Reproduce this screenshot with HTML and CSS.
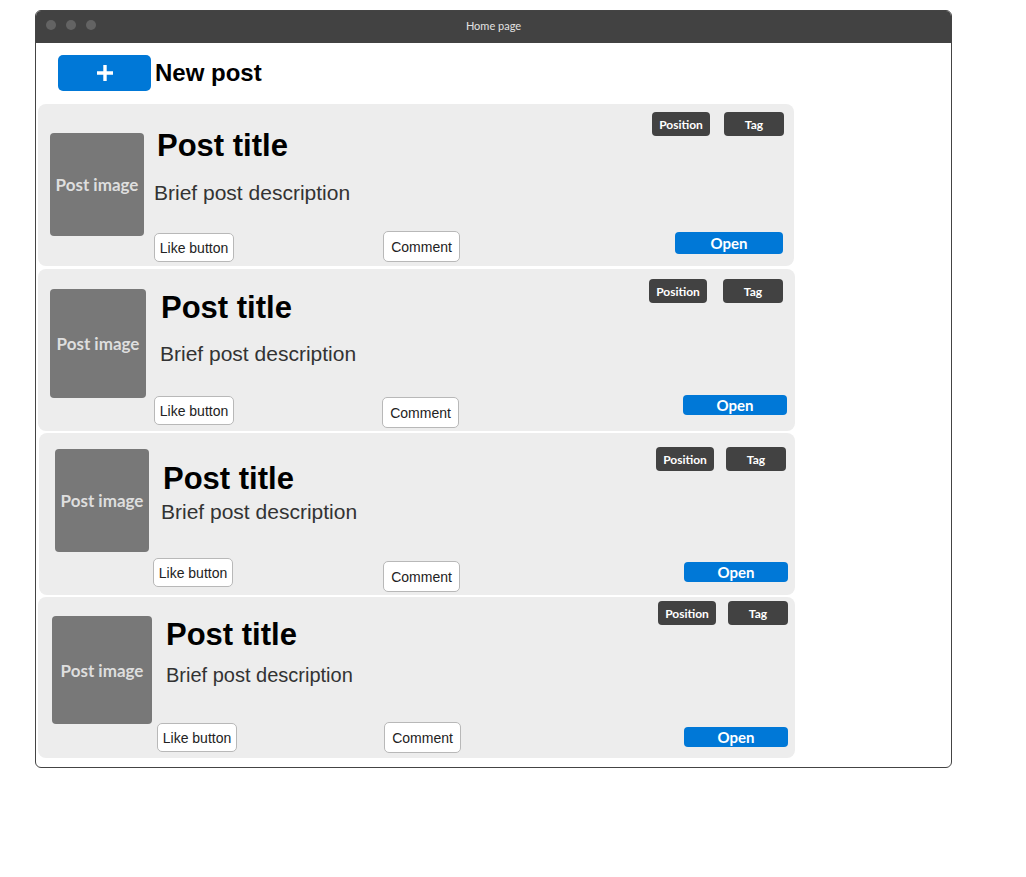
FILE: index.html
```html
<!DOCTYPE html>
<html lang="en">
<head>
<meta charset="utf-8">
<title>Home page</title>
<link rel="stylesheet" href="styles.css">
</head>
<body>
<div class="window">
  <div class="titlebar">
    <div class="dots"><span class="dot"></span><span class="dot"></span><span class="dot"></span></div>
    <div class="titlebar__title">Home page</div>
    <div></div>
  </div>
  <header class="topbar">
    <button class="new-btn" aria-label="New post">
      <svg width="20" height="20" viewBox="0 0 20 20"><path d="M10 2v16M2 10h16" stroke="#fff" stroke-width="3.4" fill="none"/></svg>
    </button>
    <h1 class="topbar__title">New post</h1>
  </header>
  <main class="cards">
    <article class="card card--1">
      <div class="thumb">Post image</div>
      <div class="body"><h2 class="title">Post title</h2><p class="desc">Brief post description</p></div>
      <div class="meta"><span class="badge badge--pos">Position</span><span class="badge badge--tag">Tag</span></div>
      <button class="btn btn--like">Like button</button>
      <button class="btn btn--comment">Comment</button>
      <button class="open">Open</button>
    </article>
    <article class="card card--2">
      <div class="thumb">Post image</div>
      <div class="body"><h2 class="title">Post title</h2><p class="desc">Brief post description</p></div>
      <div class="meta"><span class="badge badge--pos">Position</span><span class="badge badge--tag">Tag</span></div>
      <button class="btn btn--like">Like button</button>
      <button class="btn btn--comment">Comment</button>
      <button class="open">Open</button>
    </article>
    <article class="card card--3">
      <div class="thumb">Post image</div>
      <div class="body"><h2 class="title">Post title</h2><p class="desc">Brief post description</p></div>
      <div class="meta"><span class="badge badge--pos">Position</span><span class="badge badge--tag">Tag</span></div>
      <button class="btn btn--like">Like button</button>
      <button class="btn btn--comment">Comment</button>
      <button class="open">Open</button>
    </article>
    <article class="card card--4">
      <div class="thumb">Post image</div>
      <div class="body"><h2 class="title">Post title</h2><p class="desc">Brief post description</p></div>
      <div class="meta"><span class="badge badge--pos">Position</span><span class="badge badge--tag">Tag</span></div>
      <button class="btn btn--like">Like button</button>
      <button class="btn btn--comment">Comment</button>
      <button class="open">Open</button>
    </article>
  </main>
</div>
</body>
</html>
```
FILE: styles.css
```css
* { box-sizing: border-box; }
html, body { margin: 0; padding: 0; background: #fff; }
body { font-family: "Liberation Sans", Arial, sans-serif; }

.window {
  margin: 10px 0 0 35px;
  width: 917px;
  height: 758px;
  border: 1px solid #444;
  border-radius: 6px;
  overflow: hidden;
  background: #fff;
}

.titlebar {
  height: 32px;
  background: #424242;
  display: grid;
  grid-template-columns: 1fr auto 1fr;
  align-items: start;
}
.dots { display: flex; gap: 10px; padding: 9px 0 0 10px; }
.dot { width: 10px; height: 10px; border-radius: 50%; background: #636363; }
.titlebar__title {
  font-family: Lato, "Open Sans", sans-serif;
  font-size: 11px;
  color: #e2e2e2;
  line-height: 14px;
  padding-top: 8px;
}

.topbar {
  height: 61px;
  display: flex;
  align-items: flex-start;
  padding: 12px 0 0 22px;
}
.new-btn {
  width: 93px;
  height: 36px;
  border: 0;
  border-radius: 5px;
  background: #0078d7;
  display: flex;
  align-items: center;
  justify-content: center;
  padding: 0;
}
.new-btn svg { display: block; }
.topbar__title {
  margin: 0 0 0 4px;
  font-size: 24px;
  font-weight: 700;
  line-height: 36px;
  color: #000;
}

.cards { display: flex; flex-direction: column; gap: 2px; padding-left: 2px; }

.card {
  width: 757px;
  height: 162px;
  background: #ededed;
  border-radius: 8px;
  display: grid;
  grid-template-columns: 114px 231px 1fr auto;
  grid-template-rows: auto 1fr auto;
  grid-template-areas:
    "thumb body body meta"
    "thumb body body ."
    "thumb like comment open";
  --desc-size: 21px;
}
.card--1 { width: 756px; margin-bottom: 1px;
  --thumb-x: 12px; --thumb-y: 29px; --thumb-w: 94px; --thumb-h: 103px;
  --body-x: 2px; --title-x: 3px; --title-y: 24px; --desc-gap: 17px;
  --meta-y: 8px; --meta-r: 10px; --meta-gap: 14px;
  --like-x: 2px; --like-b: 4px; --comment-x: 0px; --comment-b: 4px;
  --open-w: 108px; --open-h: 22px; --open-r: 11px; --open-b: 12px; }
.card--2 {
  --thumb-x: 12px; --thumb-y: 20px; --thumb-w: 96px; --thumb-h: 109px;
  --body-x: 8px; --title-x: 1px; --title-y: 21px; --desc-gap: 16px;
  --meta-y: 10px; --meta-r: 12px; --meta-gap: 16px;
  --like-x: 2px; --like-b: 6px; --comment-x: -1px; --comment-b: 3px;
  --open-w: 104px; --open-h: 20px; --open-r: 8px; --open-b: 16px; }
.card--3 { width: 756px; margin-left: 1px;
  --thumb-x: 16px; --thumb-y: 16px; --thumb-w: 94px; --thumb-h: 103px;
  --body-x: 8px; --title-x: 2px; --title-y: 28px; --desc-gap: 3px;
  --meta-y: 14px; --meta-r: 9px; --meta-gap: 12px;
  --like-x: 0px; --like-b: 8px; --comment-x: -1px; --comment-b: 3px;
  --open-w: 104px; --open-h: 20px; --open-r: 7px; --open-b: 13px; }
.card--4 { height: 161px;
  --thumb-x: 14px; --thumb-y: 19px; --thumb-w: 100px; --thumb-h: 108px;
  --body-x: 14px; --title-x: 0px; --title-y: 20px; --desc-gap: 10px; --desc-size: 20px;
  --meta-y: 4px; --meta-r: 7px; --meta-gap: 12px;
  --like-x: 5px; --like-b: 6px; --comment-x: 1px; --comment-b: 5px;
  --open-w: 104px; --open-h: 20px; --open-r: 7px; --open-b: 11px; }

.thumb {
  grid-area: thumb;
  align-self: start;
  margin: var(--thumb-y) 0 0 var(--thumb-x);
  width: var(--thumb-w);
  height: var(--thumb-h);
  background: #787878;
  border-radius: 4px;
  display: flex;
  align-items: center;
  justify-content: center;
  font-family: Lato, "Open Sans", sans-serif;
  font-weight: 700;
  font-size: 17px;
  color: #dedede;
  white-space: nowrap;
}

.body {
  grid-area: body;
  margin: var(--title-y) 0 0 var(--body-x);
  min-width: 0;
}
.title {
  margin: 0 0 0 var(--title-x);
  font-size: 31px;
  font-weight: 700;
  line-height: 36px;
  color: #000;
}
.desc {
  margin: var(--desc-gap) 0 0;
  font-size: var(--desc-size);
  line-height: 24px;
  color: #333;
}

.meta {
  grid-area: meta;
  justify-self: end;
  display: flex;
  gap: var(--meta-gap);
  margin: var(--meta-y) var(--meta-r) 0 0;
}
.badge {
  height: 24px;
  border-radius: 4px;
  background: #424242;
  color: #fff;
  font-family: Lato, "Open Sans", sans-serif;
  font-weight: 700;
  font-size: 12px;
  display: flex;
  align-items: center;
  justify-content: center;
}
.badge--pos { width: 58px; }
.badge--tag { width: 60px; }

.btn {
  align-self: end;
  justify-self: start;
  background: #fff;
  border: 1px solid #b8b8b8;
  border-radius: 5px;
  font-family: "Liberation Sans", Arial, sans-serif;
  font-size: 14px;
  color: #222;
  padding: 0;
  display: flex;
  align-items: center;
  justify-content: center;
}
.btn--like {
  grid-area: like;
  width: 80px;
  height: 29px;
  margin: 0 0 var(--like-b) var(--like-x);
}
.btn--comment {
  grid-area: comment;
  width: 77px;
  height: 31px;
  margin: 0 0 var(--comment-b) var(--comment-x);
}

.open {
  grid-area: open;
  align-self: end;
  justify-self: end;
  width: var(--open-w);
  height: var(--open-h);
  margin: 0 var(--open-r) var(--open-b) 0;
  border: 0;
  border-radius: 4px;
  background: #0078d7;
  color: #fff;
  font-family: Lato, "Open Sans", sans-serif;
  font-weight: 700;
  font-size: 15px;
  padding: 0;
  display: flex;
  align-items: center;
  justify-content: center;
}
```
